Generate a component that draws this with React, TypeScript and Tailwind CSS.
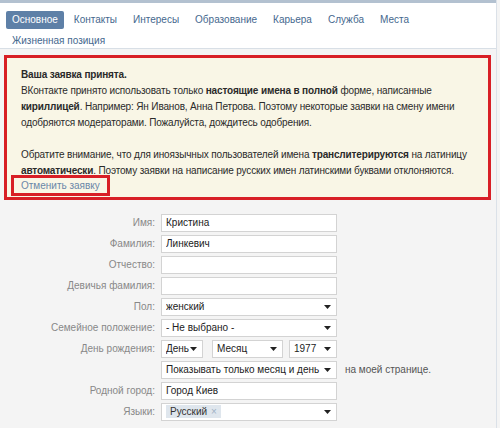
import React from 'react';

const tabs = ['Основное', 'Контакты', 'Интересы', 'Образование', 'Карьера', 'Служба', 'Места', 'Жизненная позиция'];

const Arrow: React.FC = () => (
  <svg width="7" height="4" viewBox="0 0 7 4" className="shrink-0">
    <path d="M0 0 L7 0 L3.5 4 Z" fill="#222" />
  </svg>
);

const Field: React.FC<{ value?: string; width?: string; select?: boolean; className?: string; children?: React.ReactNode }> = ({
  value,
  width = 'w-[176px]',
  select,
  className = '',
  children,
}) => (
  <div
    className={`${width} ${className} h-[18px] bg-white border border-[#d3d3d3] flex items-center pl-[4px] pr-[5px] text-[#222]`}
  >
    <span className="flex-1 whitespace-nowrap overflow-hidden">{children ?? value}</span>
    {select && <Arrow />}
  </div>
);

const Row: React.FC<{ label: string; children: React.ReactNode }> = ({ label, children }) => (
  <div className="flex items-center h-[18px]">
    <div className="w-[155px] text-right text-[#888] whitespace-nowrap">{label}</div>
    <div className="ml-[6px] flex items-center">{children}</div>
  </div>
);

export default function App() {
  return (
    <div
      className="w-[500px] h-[428px] overflow-hidden bg-[#f4f4f4] text-[10px] leading-[16px]"
      style={{ fontFamily: '"Liberation Sans", Arial, sans-serif' }}
    >
      <div className="w-[497px] h-full border-r border-[#dbe1e8]">
        {/* Tabs */}
        <div className="h-[49px] bg-white border-t-[3px] border-[#b3c1d0] border-b border-b-[#d8dfe6] pt-[8px]">
          <div className="flex flex-wrap gap-x-[4px] gap-y-[3px] px-[6px]">
            {tabs.map((t, i) => (
              <div
                key={t}
                className={`h-[18px] leading-[18px] px-[6px] rounded-[2px] whitespace-nowrap ${
                  i === 0 ? 'bg-[#5e80a7] text-white' : 'text-[#45688e]'
                } ${i === 7 ? 'basis-full' : ''}`}
              >
                {t}
              </div>
            ))}
          </div>
        </div>

        {/* Notice */}
        <div className="mt-[6px] ml-[4px] w-[487px] border-[3px] border-[#d81f26] bg-[#f9f6e6] pl-[14px] pt-[9px] pb-[1px] text-[#2a2a2a] whitespace-nowrap tracking-[-0.15px]">
          <div className="font-bold">Ваша заявка принята.</div>
          <div>
            ВКонтакте принято использовать только <b>настоящие имена в полной</b> форме, написанные
          </div>
          <div>
            <b>кириллицей</b>. Например: Ян Иванов, Анна Петрова. Поэтому некоторые заявки на смену имени
          </div>
          <div>одобряются модераторами. Пожалуйста, дождитесь одобрения.</div>
          <div className="h-[16px]" />
          <div>
            Обратите внимание, что для иноязычных пользователей имена <b>транслитерируются</b> на латиницу
          </div>
          <div>
            <b>автоматически</b>. Поэтому заявки на написание русских имен латинскими буквами отклоняются.
          </div>
          <div className="-ml-[10px] -mt-[4px]">
            <span className="inline-block border-[3px] border-[#d81f26] px-[7px] leading-[15px] text-[#6a87a8] tracking-normal">
              Отменить заявку
            </span>
          </div>
        </div>

        {/* Form */}
        <div className="mt-[14px] flex flex-col gap-[3px]">
          <Row label="Имя:">
            <Field value="Кристина" />
          </Row>
          <Row label="Фамилия:">
            <Field value="Линкевич" />
          </Row>
          <Row label="Отчество:">
            <Field />
          </Row>
          <Row label="Девичья фамилия:">
            <Field />
          </Row>
          <Row label="Пол:">
            <Field value="женский" select />
          </Row>
          <Row label="Семейное положение:">
            <Field value="- Не выбрано -" select />
          </Row>
          <Row label="День рождения:">
            <Field value="День" width="w-[42px]" select />
            <Field value="Месяц" width="w-[71px]" className="ml-[9px]" select />
            <Field value="1977" width="w-[48px]" className="ml-[6px]" select />
          </Row>
          <Row label="">
            <Field value="Показывать только месяц и день" select />
            <span className="ml-[8px] text-[#555] whitespace-nowrap">на моей странице.</span>
          </Row>
          <Row label="Родной город:">
            <Field value="Город Киев" />
          </Row>
          <Row label="Языки:">
            <Field select>
              <span className="inline-flex items-center h-[13px] bg-[#dfe6ed] px-[4px] text-[#333] leading-[13px]">
                Русский<span className="ml-[4px] text-[#9fb1c4]">×</span>
              </span>
            </Field>
          </Row>
        </div>
      </div>
    </div>
  );
}
